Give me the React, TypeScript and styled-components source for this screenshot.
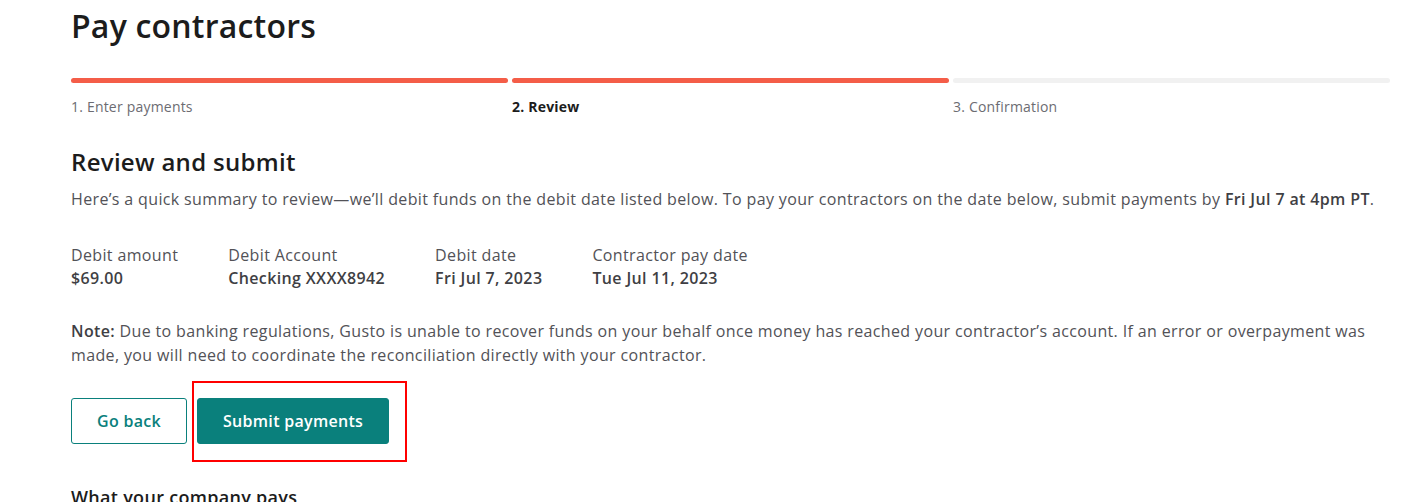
import React from 'react'
import styled, { createGlobalStyle } from 'styled-components'

const GlobalStyle = createGlobalStyle`
  body {
    margin: 0;
    background: #fff;
    font-family: "Open Sans", Lato, sans-serif;
    color: #525257;
  }
`

const Page = styled.div`
  position: relative;
  padding: 0 30px 0 71px;
`

const Title = styled.h1`
  margin: 0;
  padding-top: 6px;
  font-size: 32px;
  line-height: 40px;
  font-weight: 600;
  letter-spacing: 0.2px;
  color: #1c1c1c;
`

const Steps = styled.div`
  display: grid;
  grid-template-columns: 1fr 1fr 1fr;
  gap: 4px;
  margin-top: 32px;
`

const Step = styled.div`
  display: flex;
  flex-direction: column;
  gap: 15px;
`

const Bar = styled.div<{ $done: boolean }>`
  height: 5px;
  border-radius: 3px;
  background: ${p => (p.$done ? '#f45d48' : '#f1f1f1')};
`

const StepLabel = styled.div<{ $current: boolean }>`
  font-size: 14px;
  line-height: 18px;
  letter-spacing: 0.2px;
  color: ${p => (p.$current ? '#1c1c1c' : '#6c6c72')};
  font-weight: ${p => (p.$current ? 700 : 400)};
`

const Heading = styled.h2`
  margin: 30px 0 0;
  font-size: 24px;
  line-height: 32px;
  font-weight: 600;
  letter-spacing: 0.3px;
  color: #1c1c1c;
`

const Para = styled.p`
  margin: 9px 0 0;
  font-size: 16px;
  line-height: 24px;
  letter-spacing: 0.36px;
  color: #525257;

  b {
    font-weight: 600;
    color: #3f3f44;
  }
`

const Summary = styled.div`
  display: flex;
  gap: 50px;
  margin-top: 33px;
`

const Item = styled.div`
  display: flex;
  flex-direction: column;
`

const Label = styled.span`
  font-size: 16px;
  line-height: 23px;
  letter-spacing: 0.36px;
`

const Value = styled.span`
  font-size: 16px;
  line-height: 23px;
  letter-spacing: 0.36px;
  font-weight: 600;
  color: #3f3f44;
`

const Note = styled(Para)`
  margin-top: 29px;
`

const Actions = styled.div`
  position: relative;
  display: flex;
  gap: 10px;
  margin-top: 31px;
`

const Button = styled.button<{ $primary?: boolean }>`
  height: 46px;
  padding: 0 25px;
  border-radius: 3px;
  font-family: inherit;
  font-size: 16px;
  font-weight: 600;
  letter-spacing: 0.3px;
  border: 1px solid #0a807c;
  background: ${p => (p.$primary ? '#0a807c' : '#fff')};
  color: ${p => (p.$primary ? '#fff' : '#0a807c')};
`

const Highlight = styled.div`
  position: absolute;
  left: 121px;
  top: -17px;
  width: 211px;
  height: 77px;
  border: 2px solid #ff0000;
`

const SubHeading = styled.h3`
  margin: 41px 0 0;
  font-size: 18px;
  line-height: 24px;
  font-weight: 600;
  letter-spacing: 0.3px;
  color: #1c1c1c;
`

const steps = [
  { label: '1. Enter payments', done: true, current: false },
  { label: '2. Review', done: true, current: true },
  { label: '3. Confirmation', done: false, current: false },
]

const summary = [
  { label: 'Debit amount', value: '$69.00' },
  { label: 'Debit Account', value: 'Checking XXXX8942' },
  { label: 'Debit date', value: 'Fri Jul 7, 2023' },
  { label: 'Contractor pay date', value: 'Tue Jul 11, 2023' },
]

export default function App() {
  return (
    <>
      <GlobalStyle />
      <Page>
        <Title>Pay contractors</Title>
        <Steps>
          {steps.map(s => (
            <Step key={s.label}>
              <Bar $done={s.done} />
              <StepLabel $current={s.current}>{s.label}</StepLabel>
            </Step>
          ))}
        </Steps>
        <Heading>Review and submit</Heading>
        <Para>
          Here’s a quick summary to review—we’ll debit funds on the debit date listed below. To pay your
          contractors on the date below, submit payments by <b>Fri Jul 7 at 4pm PT</b>.
        </Para>
        <Summary>
          {summary.map(s => (
            <Item key={s.label}>
              <Label>{s.label}</Label>
              <Value>{s.value}</Value>
            </Item>
          ))}
        </Summary>
        <Note>
          <b>Note:</b> Due to banking regulations, Gusto is unable to recover funds on your behalf once money has
          reached your contractor’s account. If an error or overpayment was made, you will need to coordinate the
          reconciliation directly with your contractor.
        </Note>
        <Actions>
          <Button>Go back</Button>
          <Button $primary>Submit payments</Button>
          <Highlight />
        </Actions>
        <SubHeading>What your company pays</SubHeading>
      </Page>
    </>
  )
}
